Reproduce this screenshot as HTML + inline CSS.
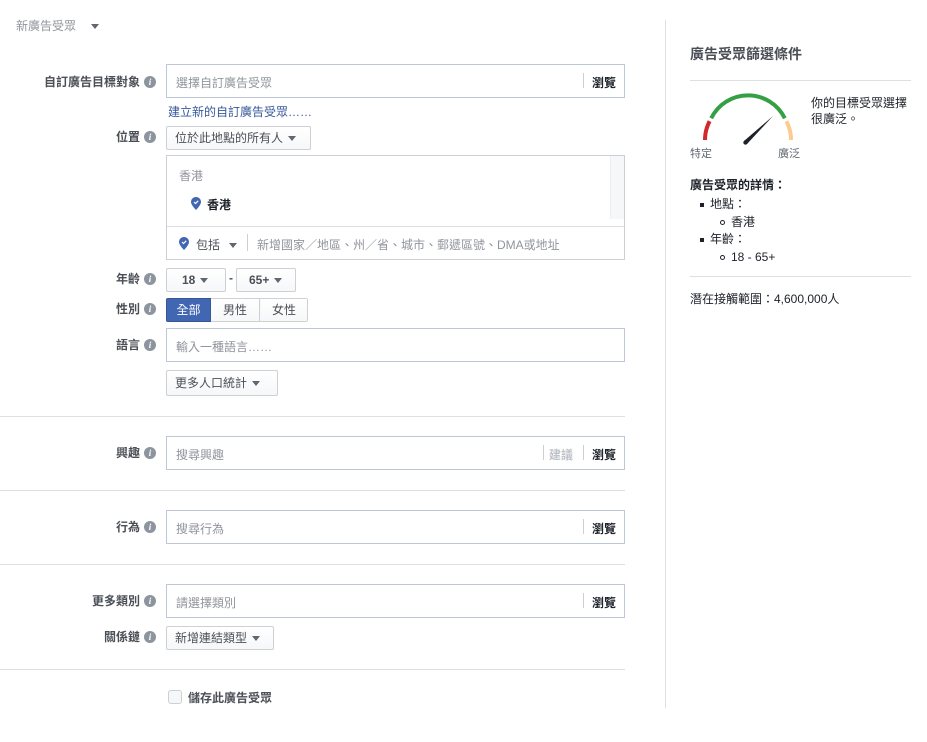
<!DOCTYPE html>
<html><head><meta charset="utf-8"><style>
*{box-sizing:border-box;margin:0;padding:0}
body{width:927px;height:742px;background:#fff;position:relative;overflow:hidden;font-family:"Liberation Sans","Noto Sans CJK TC",sans-serif;font-size:12px;color:#4b4f56}
.a{position:absolute;white-space:nowrap}
.lbl{position:absolute;right:787px;font-weight:bold;color:#4b4f56;font-size:12px;line-height:14px}
.info{position:absolute;left:144px;width:12px;height:12px;border-radius:50%;background:#8d949e;color:#fff;font:italic bold 9px/12px "Liberation Serif",serif;text-align:center}
.inp{position:absolute;left:166px;width:459px;height:34px;border:1px solid #bdc7d8;background:#fff}
.ph{position:absolute;left:9px;top:9px;color:#90949c;font-size:12px}
.brw{position:absolute;right:8px;top:9px;font-weight:bold;color:#1d2129}
.dv{position:absolute;top:8px;width:1px;height:15px;background:#ccd0d5}
.btn{position:absolute;border:1px solid #ced0d4;border-radius:2px;background:linear-gradient(#fff,#f6f7f9);color:#4b4f56;font-size:12px;line-height:22px;padding-left:8px}
.tri{display:inline-block;width:0;height:0;border-left:4px solid transparent;border-right:4px solid transparent;border-top:5px solid #606770;vertical-align:middle;margin-left:5px}
.hr{position:absolute;left:0;width:625px;height:1px;background:#dddfe2}
</style></head><body>
<div class="a" style="left:16px;top:17px;color:#90949c;font-size:12px">新廣告受眾 <span class="tri" style="margin-left:12px;border-top-color:#606770"></span></div>

<div class="lbl" style="top:75px">自訂廣告目標對象</div><div class="info" style="top:76px">i</div>
<div class="inp" style="top:64px"><div class="ph">選擇自訂廣告受眾</div><div class="dv" style="left:416px"></div><div class="brw">瀏覽</div></div>
<div class="a" style="left:168px;top:103px;color:#365899">建立新的自訂廣告受眾……</div>

<div class="lbl" style="top:130px">位置</div><div class="info" style="top:131px">i</div>
<div class="btn" style="left:166px;top:126px;width:145px;height:24px">位於此地點的所有人<span class="tri"></span></div>
<div class="a" style="left:166px;top:155px;width:459px;height:105px;border:1px solid #ccd0d5">
 <div class="a" style="right:0;top:0;width:14px;height:63px;background:#f6f7f9;border-left:1px solid #eee"></div>
 <div class="a" style="left:12px;top:11px;color:#90949c">香港</div>
 <svg class="a" style="left:24px;top:41px" width="10" height="13" viewBox="0 0 10 13"><path d="M5 0C2.2 0 0 2.2 0 5c0 3 5 8 5 8s5-5 5-8C10 2.2 7.8 0 5 0z" fill="#4267b2"/><path d="M3 5l1.5 1.5L7.2 3.8" stroke="#fff" stroke-width="1.2" fill="none"/></svg>
 <div class="a" style="left:40px;top:40px;font-weight:bold;color:#1d2129">香港</div>
 <div class="a" style="left:0;top:70px;width:457px;height:1px;background:#dddfe2"></div>
 <svg class="a" style="left:12px;top:81px" width="10" height="13" viewBox="0 0 10 13"><path d="M5 0C2.2 0 0 2.2 0 5c0 3 5 8 5 8s5-5 5-8C10 2.2 7.8 0 5 0z" fill="#4267b2"/><path d="M3 5l1.5 1.5L7.2 3.8" stroke="#fff" stroke-width="1.2" fill="none"/></svg>
 <div class="a" style="left:29px;top:80px;color:#4b4f56">包括 <span class="tri" style="margin-left:6px"></span></div>
 <div class="a" style="left:80px;top:78px;width:1px;height:17px;background:#ccd0d5"></div>
 <div class="a" style="left:90px;top:80px;color:#90949c">新增國家／地區、州／省、城市、郵遞區號、DMA或地址</div>
</div>

<div class="lbl" style="top:272px">年齡</div><div class="info" style="top:273px">i</div>
<div class="btn" style="left:166px;top:268px;width:60px;height:24px;padding-left:15px;font-weight:bold">18<span class="tri"></span></div>
<div class="a" style="left:229px;top:271px;font-weight:bold">-</div>
<div class="btn" style="left:236px;top:268px;width:60px;height:24px;padding-left:12px;font-weight:bold">65+<span class="tri"></span></div>

<div class="lbl" style="top:302px">性別</div><div class="info" style="top:303px">i</div>
<div class="a" style="left:166px;top:298px;width:142px;height:24px;border:1px solid #ced0d4;border-radius:2px;background:#f6f7f9"></div>
<div class="a" style="left:166px;top:298px;width:45px;height:24px;background:#4267b2;border:1px solid #365899;border-radius:2px 0 0 2px;color:#fff;text-align:center;line-height:22px">全部</div>
<div class="a" style="left:211px;top:299px;width:49px;height:22px;border-right:1px solid #ced0d4;text-align:center;line-height:22px;background:linear-gradient(#fff,#f6f7f9)">男性</div>
<div class="a" style="left:261px;top:299px;width:46px;height:22px;text-align:center;line-height:22px;background:linear-gradient(#fff,#f6f7f9)">女性</div>

<div class="lbl" style="top:338px">語言</div><div class="info" style="top:339px">i</div>
<div class="inp" style="top:328px"><div class="ph">輸入一種語言……</div></div>
<div class="btn" style="left:166px;top:370px;width:112px;height:26px;line-height:24px">更多人口統計<span class="tri"></span></div>

<div class="hr" style="top:416px"></div>
<div class="lbl" style="top:446px">興趣</div><div class="info" style="top:447px">i</div>
<div class="inp" style="top:436px"><div class="ph">搜尋興趣</div><div class="dv" style="left:376px"></div><div class="a" style="left:382px;top:9px;color:#bec3c9;font-weight:bold">建議</div><div class="dv" style="left:416px"></div><div class="brw">瀏覽</div></div>

<div class="hr" style="top:490px"></div>
<div class="lbl" style="top:520px">行為</div><div class="info" style="top:521px">i</div>
<div class="inp" style="top:510px"><div class="ph">搜尋行為</div><div class="dv" style="left:416px"></div><div class="brw">瀏覽</div></div>

<div class="hr" style="top:564px"></div>
<div class="lbl" style="top:594px">更多類別</div><div class="info" style="top:595px">i</div>
<div class="inp" style="top:584px"><div class="ph">請選擇類別</div><div class="dv" style="left:416px"></div><div class="brw">瀏覽</div></div>
<div class="lbl" style="top:630px">關係鏈</div><div class="info" style="top:631px">i</div>
<div class="btn" style="left:166px;top:626px;width:108px;height:24px">新增連結類型<span class="tri"></span></div>

<div class="hr" style="top:669px"></div>
<div class="a" style="left:168px;top:690px;width:14px;height:14px;border:1px solid #ccd0d5;border-radius:3px;background:#f6f7f9"></div>
<div class="a" style="left:188px;top:689px;font-weight:bold;color:#4b4f56">儲存此廣告受眾</div>

<div class="a" style="left:665px;top:20px;width:1px;height:688px;background:#dddfe2"></div>
<div class="a" style="left:690px;top:44px;font-size:14px;font-weight:bold;color:#4b4f56">廣告受眾篩選條件</div>
<div class="a" style="left:690px;top:80px;width:221px;height:1px;background:#dddfe2"></div>
<svg class="a" style="left:690px;top:90px" width="120" height="60" viewBox="0 0 120 60">
 <path d="M15 50 A41 41 0 0 1 19.6 31.2" stroke="#d0282b" stroke-width="4" fill="none"/>
 <path d="M21.2 28.3 A41 41 0 0 1 94.8 28.3" stroke="#35a043" stroke-width="4" fill="none"/>
 <path d="M96.4 31.2 A41 41 0 0 1 101 50" stroke="#fdcb8c" stroke-width="4" fill="none"/>
 <path d="M54 51 L83 26 L57 54 Z" fill="#1d2129"/>
 <circle cx="55.5" cy="52.5" r="2.2" fill="#1d2129"/>
</svg>
<div class="a" style="left:690px;top:145px;font-size:11px;color:#606770">特定</div>
<div class="a" style="left:778px;top:145px;font-size:11px;color:#606770">廣泛</div>
<div class="a" style="left:811px;top:95px;color:#1d2129;line-height:16px">你的目標受眾選擇<br>很廣泛。</div>
<div class="a" style="left:690px;top:176px;color:#1d2129;font-weight:bold">廣告受眾的詳情：</div>
<div class="a" style="left:700px;top:196px;color:#1d2129;line-height:17.5px">
<div><span style="display:inline-block;width:4px;height:4px;background:#1d2129;vertical-align:middle;margin-right:6px"></span>地點：</div>
<div style="padding-left:20px"><span style="display:inline-block;width:5px;height:5px;border:1px solid #1d2129;border-radius:50%;vertical-align:middle;margin-right:6px"></span>香港</div>
<div><span style="display:inline-block;width:4px;height:4px;background:#1d2129;vertical-align:middle;margin-right:6px"></span>年齡：</div>
<div style="padding-left:20px"><span style="display:inline-block;width:5px;height:5px;border:1px solid #1d2129;border-radius:50%;vertical-align:middle;margin-right:6px"></span>18 - 65+</div>
</div>
<div class="a" style="left:690px;top:276px;width:221px;height:1px;background:#dddfe2"></div>
<div class="a" style="left:690px;top:290px;color:#1d2129">潛在接觸範圍：4,600,000人</div>
</body></html>
